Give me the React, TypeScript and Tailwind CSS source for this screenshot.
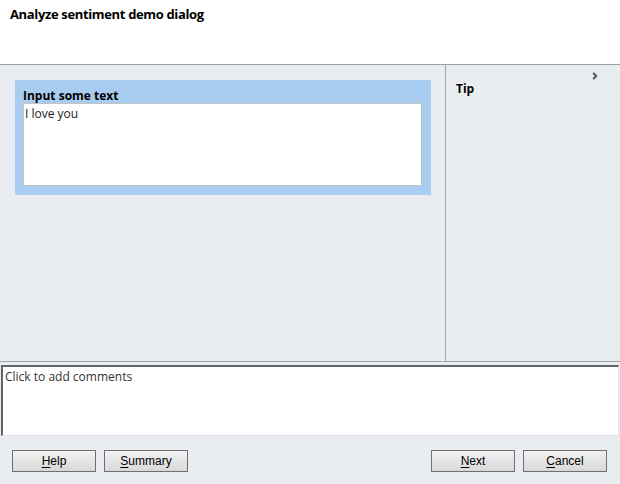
import { ChevronRight } from 'lucide-react';

const buttonClass =
  'w-[84px] h-[22px] border border-[#707070] bg-gradient-to-b from-[#f2f2f2] to-[#d8d8d8] text-[12px] text-black flex items-center justify-center';

function DialogButton({ hotkey, rest }: { hotkey: string; rest: string }) {
  return (
    <button className={buttonClass} style={{ fontFamily: '"Liberation Sans", Arial, sans-serif' }}>
      <span className="underline underline-offset-2">{hotkey}</span>
      {rest}
    </button>
  );
}

export default function App() {
  return (
    <div
      className="w-[620px] h-[484px] bg-[#e9ecf0] flex flex-col text-[#1b1b1b] overflow-hidden"
      style={{ fontFamily: '"Open Sans", "Noto Sans", sans-serif' }}
    >
      {/* Header */}
      <div className="h-[65px] bg-white border-b border-[#a0a0a0] px-[10px] pt-[5px]">
        <h1 className="text-[13px] font-bold text-black tracking-[-0.35px]">Analyze sentiment demo dialog</h1>
      </div>

      {/* Main */}
      <div className="h-[297px] flex border-b border-[#a0a4ab]">
        <div className="w-[446px] border-r border-[#a0a4ab] pl-[15px] pt-[15px]">
          <div className="w-[416px] h-[115px] bg-[#a8cdf0] pl-[8px] pr-[9px] pb-[9px] flex flex-col">
            <div className="h-[23px] pt-[8px] text-[12px] font-bold text-black leading-[15px]">Input some text</div>
            <div className="flex-1 bg-white border border-[#c4c4c4] px-[1px] text-[12px] leading-[16px] pt-[2px]">
              I love you
            </div>
          </div>
        </div>
        <div className="flex-1 relative pl-[10px] pt-[16px]">
          <ChevronRight className="absolute right-[20px] top-[6px] w-[10px] h-[10px] text-[#555]" strokeWidth={5} />
          <div className="text-[12px] font-bold text-black leading-[16px]">Tip</div>
        </div>
      </div>

      {/* Comments */}
      <div className="pt-[3px] px-[1px]">
        <div className="h-[71px] bg-white border-t-2 border-l-2 border-[#646464] border-r border-b border-r-[#e0e0e0] border-b-[#e0e0e0] px-[2px] pt-[2px] text-[12px] leading-[16px] text-[#333]">
          Click to add comments
        </div>
      </div>

      {/* Footer */}
      <div className="flex items-start pt-[14px] pl-[12px] pr-[13px]">
        <div className="flex gap-[8px]">
          <DialogButton hotkey="H" rest="elp" />
          <DialogButton hotkey="S" rest="ummary" />
        </div>
        <div className="ml-auto flex gap-[8px]">
          <DialogButton hotkey="N" rest="ext" />
          <DialogButton hotkey="C" rest="ancel" />
        </div>
      </div>
    </div>
  );
}
